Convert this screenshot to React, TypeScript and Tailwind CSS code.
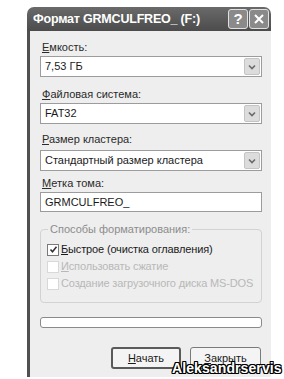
import React from "react";

const font = "font-['Liberation_Sans','DejaVu_Sans',sans-serif]";

const Arrow = () => (
  <div className="my-[1px] mr-[1px] w-[16px] rounded-[2px] border border-[#c4c4c4] bg-[#dcdcdc] flex items-center justify-center">
    <svg width="8" height="6" viewBox="0 0 8 6">
      <path d="M1 1.5 L4 4.5 L7 1.5" stroke="#6a6a6a" strokeWidth="1.6" fill="none" />
    </svg>
  </div>
);

const Combo = ({ value, cls }: { value: string; cls: string }) => (
  <div className={`${cls} h-[21px] flex border border-[#9c9c9c] bg-white`}>
    <div className="flex-1 pl-[4px] flex items-center text-[#1a1a1a] whitespace-nowrap">{value}</div>
    <Arrow />
  </div>
);

const Label = ({ first, rest, cls }: { first: string; rest: string; cls: string }) => (
  <div className={`${cls} h-[14px] pl-[2px] leading-[14px] text-[#2a2a2a] whitespace-nowrap`}>
    <span className="underline">{first}</span>
    {rest}
  </div>
);

const Check = ({ checked, disabled, first, rest }: { checked?: boolean; disabled?: boolean; first: string; rest: string }) => (
  <div className="h-[17px] flex items-center gap-[2px]">
    <div
      className={`shrink-0 w-[12px] h-[12px] border bg-white flex items-center justify-center ${
        disabled ? "border-[#d8d8d8]" : "border-[#7a7a7a]"
      }`}
    >
      {checked && (
        <svg width="9" height="9" viewBox="0 0 9 9">
          <path d="M1.5 4.5 L3.5 6.8 L7.5 1.8" stroke="#333" strokeWidth="1.6" fill="none" />
        </svg>
      )}
    </div>
    <div className={`whitespace-nowrap tracking-[-0.15px] ${disabled ? "text-[#b8b8b8]" : "text-[#1a1a1a]"}`}>
      <span className="underline">{first}</span>
      {rest}
    </div>
  </div>
);

export default function App() {
  return (
    <div className={`relative w-[284px] h-[379px] overflow-hidden bg-white text-[11px] ${font}`}>
      <div className="ml-[27px] mt-[7px] w-[244px] flex flex-col">
        {/* title bar */}
        <div className="h-[24px] rounded-t-[7px] bg-linear-to-b from-[#6a6a6a] to-[#4c4c4c] flex items-center pl-[6px] pr-[2px]">
          <div className="flex-1 text-white text-[12.5px] font-bold tracking-[-0.2px] whitespace-nowrap">
            Формат GRMCULFREO_ (F:)
          </div>
          <div className="flex gap-[1px]">
            <div className="w-[20px] h-[20px] rounded-[3px] border border-[#e0e0e0] bg-[#8a8a8a] flex items-center justify-center text-white font-bold text-[15px]">
              ?
            </div>
            <div className="w-[20px] h-[20px] rounded-[3px] border border-[#e0e0e0] bg-[#8a8a8a] flex items-center justify-center">
              <svg width="12" height="12" viewBox="0 0 12 12">
                <path d="M2 2 L10 10 M10 2 L2 10" stroke="white" strokeWidth="2" />
              </svg>
            </div>
          </div>
        </div>

        {/* body */}
        <div className="h-[346px] border-l-[3px] border-[#505050] bg-[#eeeeee] pl-[10px] pr-[9px] flex flex-col">
          <Label cls="mt-[9px]" first="Е" rest="мкость:" />
          <Combo cls="mt-[2px]" value="7,53 ГБ" />
          <Label cls="mt-[10px]" first="Ф" rest="айловая система:" />
          <Combo cls="mt-[2px]" value="FAT32" />
          <Label cls="mt-[8px]" first="Р" rest="азмер кластера:" />
          <Combo cls="mt-[4px]" value="Стандартный размер кластера" />
          <Label cls="mt-[5px]" first="М" rest="етка тома:" />
          <div className="mt-[2px] h-[20px] border border-[#9c9c9c] bg-white pl-[4px] flex items-center text-[#1a1a1a]">
            GRMCULFREO_
          </div>

          <fieldset className="mt-[10px] rounded-[4px] border border-[#d2d2d2] px-[6px] pb-[10px]">
            <legend className="ml-[1px] px-[2px] h-[14px] leading-[14px] text-[#8c8c8c] whitespace-nowrap">
              Способы форматирования:
            </legend>
            <div className="mt-[5px] flex flex-col">
              <Check checked first="Б" rest="ыстрое (очистка оглавления)" />
              <Check disabled first="И" rest="спользовать сжатие" />
              <Check disabled first="" rest="Создание загрузочного диска MS-DOS" />
            </div>
          </fieldset>

          <div className="mt-[14px] h-[11px] rounded-[3px] border border-[#8a8a8a] bg-white" />

          <div className="mt-[19px] flex justify-end gap-[9px] pr-[1px]">
            <div className="w-[70px] h-[22px] rounded-[3px] border-2 border-[#5a5a5a] bg-[#f4f4f4] flex items-center justify-center text-[#1a1a1a]">
              <span className="underline">Н</span>ачать
            </div>
            <div className="w-[71px] h-[22px] rounded-[3px] border border-[#7a7a7a] bg-[#f4f4f4] flex items-center justify-center text-[#1a1a1a]">
              <span className="underline">З</span>акрыть
            </div>
          </div>
        </div>
      </div>

      {/* watermark */}
      <div className="absolute left-[172px] top-[360px] text-white font-bold text-[14px] leading-[16px] tracking-[0.1px] whitespace-nowrap [text-shadow:1px_1px_0_#000,-1px_-1px_0_#000,1px_-1px_0_#000,-1px_1px_0_#000,0_1px_0_#000,0_-1px_0_#000,1px_0_0_#000,-1px_0_0_#000]">
        Aleksandrservis
      </div>
    </div>
  );
}
